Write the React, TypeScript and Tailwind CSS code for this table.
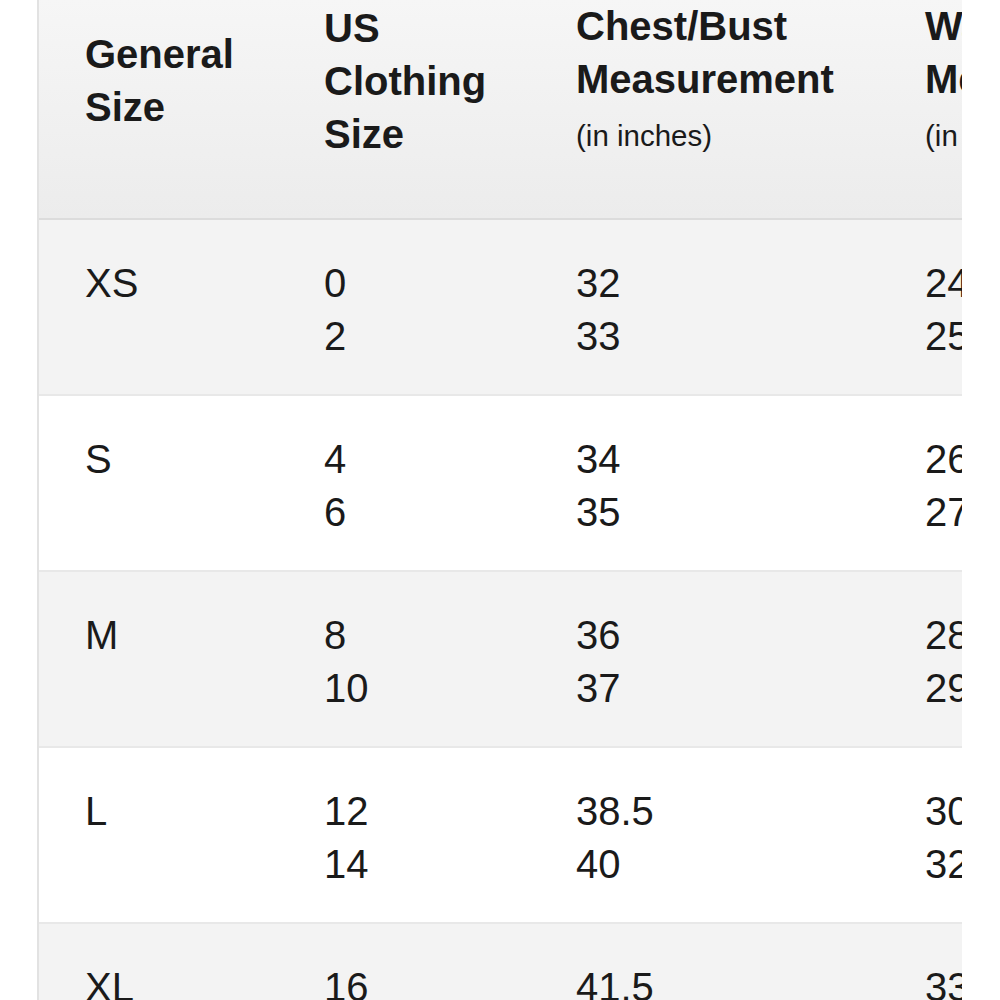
import React from "react";

const rows: { size: string; us: string[]; chest: string[]; waist: string[] }[] = [
  { size: "XS", us: ["0", "2"], chest: ["32", "33"], waist: ["24", "25"] },
  { size: "S", us: ["4", "6"], chest: ["34", "35"], waist: ["26", "27"] },
  { size: "M", us: ["8", "10"], chest: ["36", "37"], waist: ["28", "29"] },
  { size: "L", us: ["12", "14"], chest: ["38.5", "40"], waist: ["30", "32"] },
  { size: "XL", us: ["16", "18"], chest: ["41.5", "43"], waist: ["33", "34.5"] },
];

const cols = "grid grid-cols-[239px_252px_349px_349px] w-max";

export default function App() {
  return (
    <div
      className="w-[1000px] h-[1000px] overflow-hidden bg-white text-[#1a1a1a]"
      style={{ fontFamily: '"Liberation Sans", Arial, Helvetica, sans-serif' }}
    >
      <div className="ml-[37px] w-[925px] border-l-2 border-[#e2e2e2] overflow-hidden">
        <div
          className={`${cols} items-center pb-[56px] border-b-2 border-[#dcdcdc] bg-gradient-to-b from-[#f6f6f6] to-[#ececec] text-[40px] leading-[53px] font-bold`}
        >
          <div className="pl-[46px]">
            General
            <br />
            Size
          </div>
          <div className="pl-[46px]">
            US
            <br />
            Clothing
            <br />
            Size
          </div>
          <div className="pl-[46px] whitespace-nowrap">
            Chest/Bust
            <br />
            Measurement
            <br />
            <span className="text-[29.5px] font-normal">(in inches)</span>
          </div>
          <div className="pl-[46px] whitespace-nowrap">
            Waist
            <br />
            Measurement
            <br />
            <span className="text-[29.5px] font-normal">(in inches)</span>
          </div>
        </div>
        {rows.map((r, i) => (
          <div
            key={r.size}
            className={`${cols} items-start pt-[37px] pb-[31px] border-b-2 border-[#e8e8e8] text-[40px] leading-[53px] ${
              i % 2 === 0 ? "bg-[#f3f3f3]" : "bg-white"
            }`}
          >
            <div className="pl-[46px]">{r.size}</div>
            <div className="pl-[46px]">
              {r.us[0]}
              <br />
              {r.us[1]}
            </div>
            <div className="pl-[46px]">
              {r.chest[0]}
              <br />
              {r.chest[1]}
            </div>
            <div className="pl-[46px]">
              {r.waist[0]}
              <br />
              {r.waist[1]}
            </div>
          </div>
        ))}
      </div>
    </div>
  );
}
